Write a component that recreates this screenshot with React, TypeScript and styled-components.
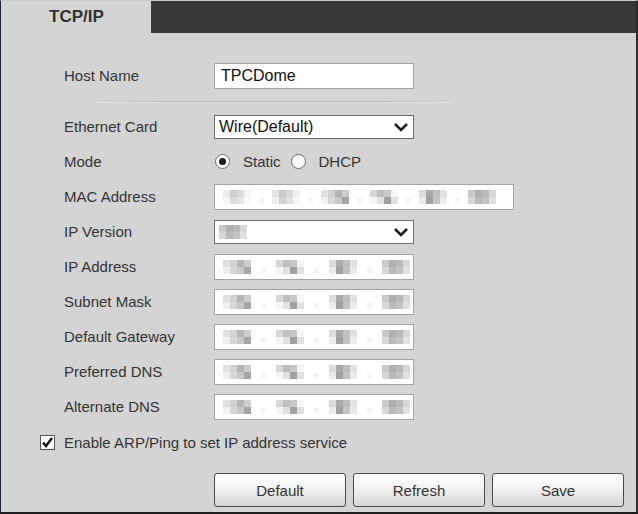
import React from 'react';
import styled, { createGlobalStyle } from 'styled-components';

const GlobalStyle = createGlobalStyle`
  html, body {
    margin: 0;
    padding: 0;
    background: #d4d4d4;
  }
  * {
    box-sizing: border-box;
  }
`;

const Frame = styled.div`
  width: 638px;
  height: 514px;
  background: #d4d4d4;
  border-left: 1px solid #1c2230;
  border-right: 2px solid #2a2a2a;
  border-bottom: 2px solid #1e1e1e;
  border-top: 1px solid #c8c8c8;
  font-family: 'Liberation Sans', Arial, sans-serif;
  color: #333;
  display: flex;
  flex-direction: column;
`;

const TabBar = styled.div`
  display: flex;
  height: 32px;
`;

const Tab = styled.div`
  width: 150px;
  padding-left: 48px;
  display: flex;
  align-items: center;
  font-size: 17px;
  font-weight: bold;
  color: #333;
  background: #d4d4d4;
`;

const TabFill = styled.div`
  flex: 1;
  background: #383838;
`;

const Form = styled.div`
  padding-top: 25px;
  display: flex;
  flex-direction: column;
`;

const Row = styled.div<{ $indent?: number }>`
  display: flex;
  align-items: center;
  height: 35px;
  padding-left: ${p => p.$indent ?? 63}px;
`;

const Label = styled.div`
  width: 150px;
  font-size: 15px;
  color: #333;
`;

const Separator = styled.div`
  margin: 8px 0 6px 94px;
  width: 358px;
  height: 2px;
  background: linear-gradient(to right, rgba(180,180,180,0), #bdbdbd 20%, #bdbdbd 80%, rgba(180,180,180,0));
  border-bottom: 1px solid rgba(240,240,240,0.6);
`;

const TextBox = styled.div<{ $width?: number }>`
  width: ${p => p.$width ?? 200}px;
  height: 26px;
  background: #fff;
  border: 1px solid #a3a3a3;
  display: flex;
  align-items: center;
  padding-left: 6px;
  font-size: 16px;
  color: #111;
`;

const SelectBox = styled.div`
  width: 200px;
  height: 24px;
  background: #fff;
  border: 1px solid #6e6e6e;
  display: flex;
  align-items: center;
  justify-content: space-between;
  padding: 0 4px 0 4px;
  font-size: 16px;
  color: #111;
`;

const Chevron = () => (
  <svg width="16" height="12" viewBox="0 0 16 12">
    <polyline points="2,3 8,9 14,3" fill="none" stroke="#1a1a1a" strokeWidth="2.6" />
  </svg>
);

const RadioGroup = styled.div`
  display: flex;
  align-items: center;
  font-size: 15px;
  color: #333;
`;

const Radio = styled.span<{ $checked?: boolean }>`
  width: 15px;
  height: 15px;
  border-radius: 50%;
  border: 1px solid #6a6a6a;
  background: #fff;
  display: inline-flex;
  align-items: center;
  justify-content: center;
  margin: 0 13px 0 1px;
  &::after {
    content: '';
    width: 7px;
    height: 7px;
    border-radius: 50%;
    background: ${p => (p.$checked ? '#1a1a1a' : 'transparent')};
  }
`;

const RadioText = styled.span`
  margin-right: 9px;
`;

const Pixels = styled.div<{ $gap: number }>`
  display: flex;
  align-items: center;
  gap: ${p => p.$gap}px;
  padding-left: 2px;
`;

const Group = styled.div`
  display: grid;
  grid-template-columns: repeat(4, 7px);
  grid-template-rows: repeat(2, 7px);
`;

const Cell = styled.span<{ $shade: number }>`
  background: rgb(${p => p.$shade}, ${p => p.$shade}, ${p => p.$shade});
`;

const Dot = styled.span`
  width: 5px;
  height: 5px;
  margin-top: 8px;
  background: #f3f3f3;
`;

const patterns = [
  [225, 210, 180, 205, 240, 215, 200, 165],
  [215, 190, 200, 245, 245, 225, 160, 225],
  [220, 170, 190, 225, 235, 160, 195, 235],
  [200, 175, 185, 215, 215, 185, 195, 225],
  [235, 205, 220, 245, 245, 220, 230, 250],
  [225, 200, 215, 240, 240, 210, 225, 245],
];

const Blurred = ({ groups, gap }: { groups: number; gap: number }) => (
  <Pixels $gap={gap}>
    {Array.from({ length: groups }).map((_, i) => (
      <React.Fragment key={i}>
        {i > 0 && <Dot />}
        <Group>
          {patterns[(i + (groups > 4 ? 4 : 0)) % patterns.length].map((s, j) => (
            <Cell key={j} $shade={s} />
          ))}
        </Group>
      </React.Fragment>
    ))}
  </Pixels>
);

const CheckRow = styled(Row)`
  margin-top: 1px;
`;

const CheckBox = styled.span`
  width: 15px;
  height: 15px;
  background: #fff;
  border: 1px solid #555;
  display: inline-flex;
  align-items: center;
  justify-content: center;
  margin-right: 9px;
`;

const CheckText = styled.span`
  font-size: 15px;
  color: #333;
`;

const Buttons = styled.div`
  display: flex;
  gap: 7px;
  padding-left: 213px;
  margin-top: 13px;
`;

const Button = styled.button`
  width: 132px;
  height: 34px;
  border: 1px solid #4a4a4a;
  border-radius: 3px;
  background: linear-gradient(#fefefe, #f2f2f2 45%, #d6d6d6);
  font-family: 'Liberation Sans', Arial, sans-serif;
  font-size: 15px;
  color: #333;
  padding: 0;
`;

const ipRows = ['IP Address', 'Subnet Mask', 'Default Gateway', 'Preferred DNS', 'Alternate DNS'];

export default function App() {
  return (
    <>
      <GlobalStyle />
      <Frame>
        <TabBar>
          <Tab>TCP/IP</Tab>
          <TabFill />
        </TabBar>
        <Form>
          <Row>
            <Label>Host Name</Label>
            <TextBox>TPCDome</TextBox>
          </Row>
          <Separator />
          <Row>
            <Label>Ethernet Card</Label>
            <SelectBox>
              Wire(Default)
              <Chevron />
            </SelectBox>
          </Row>
          <Row>
            <Label>Mode</Label>
            <RadioGroup>
              <Radio $checked />
              <RadioText>Static</RadioText>
              <Radio />
              <RadioText>DHCP</RadioText>
            </RadioGroup>
          </Row>
          <Row>
            <Label>MAC Address</Label>
            <TextBox $width={300}>
              <Blurred groups={6} gap={8} />
            </TextBox>
          </Row>
          <Row>
            <Label>IP Version</Label>
            <SelectBox>
              <Group>
                {patterns[3].map((s, j) => (
                  <Cell key={j} $shade={s} />
                ))}
              </Group>
              <Chevron />
            </SelectBox>
          </Row>
          {ipRows.map(name => (
            <Row key={name}>
              <Label>{name}</Label>
              <TextBox>
                <Blurred groups={4} gap={10} />
              </TextBox>
            </Row>
          ))}
          <CheckRow $indent={39}>
            <CheckBox>
              <svg width="13" height="13" viewBox="0 0 13 13">
                <polyline points="2,6.5 5,10 11,2" fill="none" stroke="#111" strokeWidth="2.4" />
              </svg>
            </CheckBox>
            <CheckText>Enable ARP/Ping to set IP address service</CheckText>
          </CheckRow>
          <Buttons>
            <Button>Default</Button>
            <Button>Refresh</Button>
            <Button>Save</Button>
          </Buttons>
        </Form>
      </Frame>
    </>
  );
}
